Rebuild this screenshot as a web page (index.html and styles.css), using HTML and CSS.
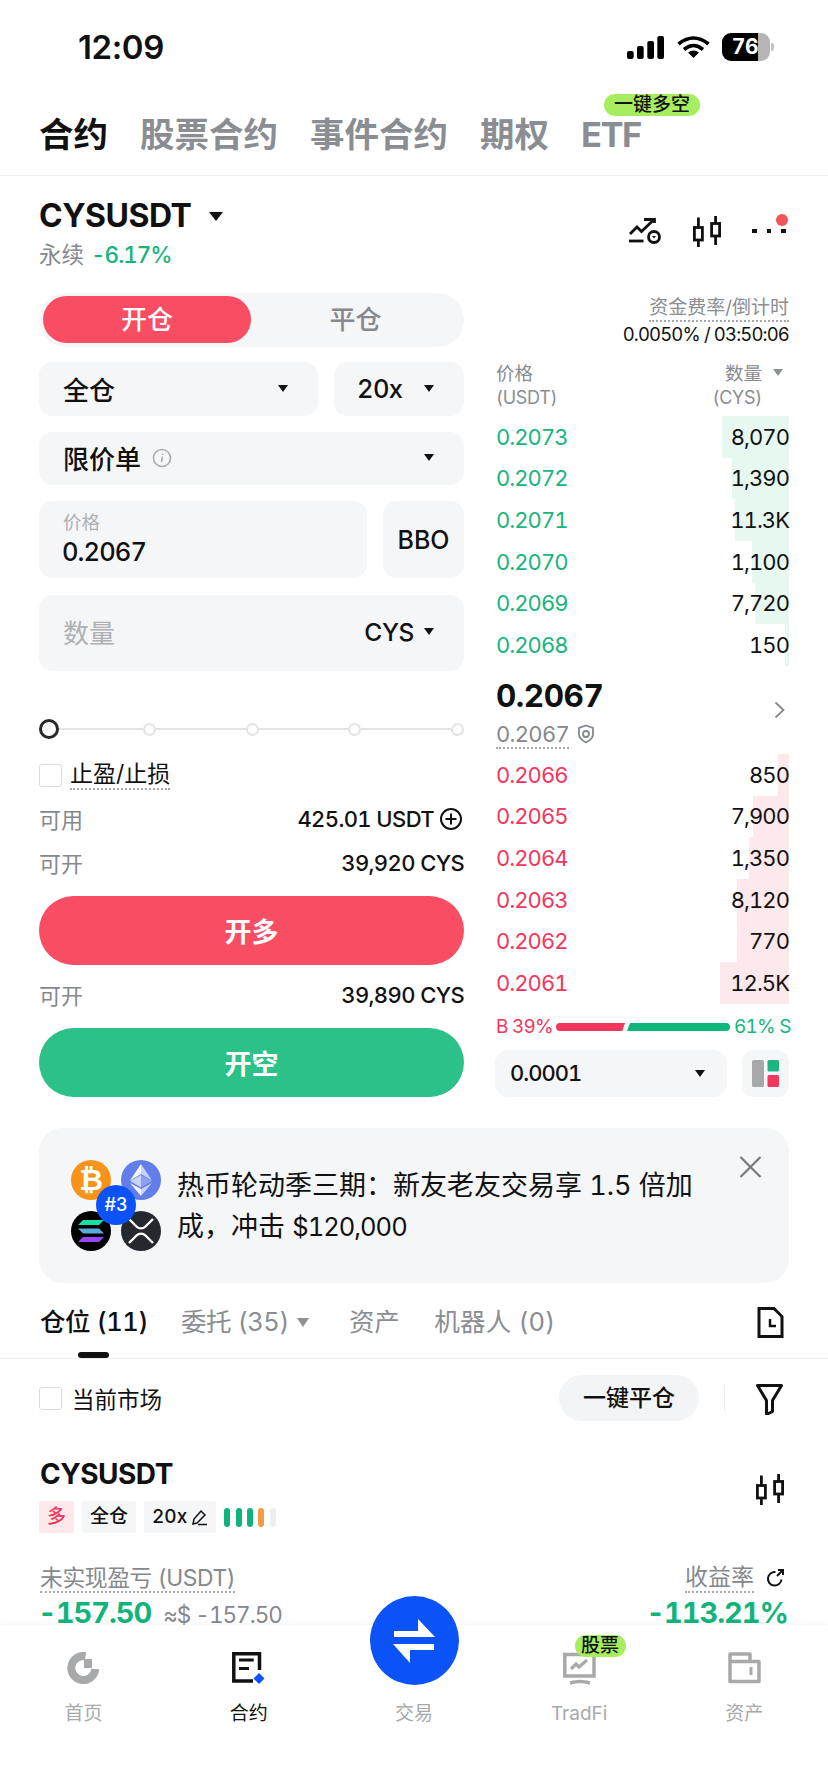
FILE: index.html
```html
<!DOCTYPE html>
<html lang="zh">
<head>
<meta charset="utf-8">
<title>CYSUSDT</title>
<link rel="stylesheet" href="styles.css">
</head>
<body>
<div class="phone">
  <header class="status">
    <span class="time">12:09</span>
    <div class="status-icons">
      <svg width="37" height="23" viewBox="0 0 37 23" fill="#000"><rect x="0" y="15" width="6.700" height="8" rx="2"/><rect x="10" y="10" width="6.700" height="13" rx="2"/><rect x="20.300" y="5" width="6.700" height="18" rx="2"/><rect x="30.300" y="0" width="6.700" height="23" rx="2"/></svg>
      <svg class="wifi" width="33" height="22" viewBox="0 0 33 22" fill="none" stroke="#000" stroke-width="3.600"><path d="M1.500 8Q16.500 -4 31.500 8"/><path d="M7 13.500Q16.500 5.500 26 13.500"/><path d="M11 16.500Q16.500 12.500 22 16.500L16.500 22Z" fill="#000" stroke="none"/></svg>
      <div class="battery"><span class="bat-fill">76</span><span class="bat-rest"></span><span class="bat-tip"></span></div>
    </div>
  </header>

  <nav class="topnav">
    <span class="topnav-item is-active">合约</span>
    <span class="topnav-item">股票合约</span>
    <span class="topnav-item">事件合约</span>
    <span class="topnav-item">期权</span>
    <span class="topnav-item etf">ETF<span class="promo promo-etf">一键多空</span></span>
  </nav>

  <section class="symbol">
    <div>
      <div class="symbol-name">CYSUSDT<i class="tri tri-lg"></i></div>
      <div class="symbol-sub"><span>永续</span><span class="green">-6.17%</span></div>
    </div>
    <div class="symbol-tools">
      <svg width="33" height="26" viewBox="0 0 33 26" fill="none" stroke="#111" stroke-width="2.800"><path d="M1 16l7-7 4.500 4.500L25 1.500M15 1.500h10.500V5"/><path d="M0 23h14.500"/><circle cx="25" cy="19" r="5.500"/><path d="M23 18h4l-2 2.500z" fill="#111" stroke="none"/></svg>
      <svg width="28" height="31" viewBox="0 0 28 31" fill="none" stroke="#111" stroke-width="2.800"><rect x="1.400" y="11.500" width="8" height="12.500"/><rect x="18.600" y="7.500" width="8" height="12.500"/><path d="M5.400 1.500v10M5.400 24v7M22.600 0v7.500M22.600 20v9"/></svg>
      <div class="more"><i></i><i></i><i></i><b></b></div>
    </div>
  </section>

  <main class="trade">
    <div class="form">
      <div class="toggle"><span class="toggle-on">开仓</span><span class="toggle-off">平仓</span></div>
      <div class="field-row">
        <div class="field field-grow h54"><span>全仓</span><i class="tri"></i></div>
        <div class="field lev h54"><span>20x</span><i class="tri"></i></div>
      </div>
      <div class="field h53"><span class="with-info">限价单<svg width="20" height="20" viewBox="0 0 20 20" fill="none" stroke="#a9abaf" stroke-width="1.600"><circle cx="10" cy="10" r="8.500"/><path d="M10.500 8.500l-1 5.500M10.700 5.500v1.500"/></svg></span><i class="tri"></i></div>
      <div class="field-row row-price">
        <div class="field field-grow price">
          <small>价格</small>
          <span>0.2067</span>
        </div>
        <div class="field bbo">BBO</div>
      </div>
      <div class="field qty">
        <span class="muted">数量</span>
        <span class="qty-unit">CYS<i class="tri"></i></span>
      </div>
      <div class="slider">
        <i class="knob"></i><i class="track track-first"></i><i class="tick"></i><i class="track"></i><i class="tick"></i><i class="track"></i><i class="tick"></i><i class="track"></i><i class="tick"></i>
      </div>
      <label class="tpsl"><i class="check"></i><span class="dotted">止盈/止损</span></label>
      <div class="kv first"><span>可用</span><b>425.01 USDT<svg width="22" height="22" viewBox="0 0 22 22" fill="none" stroke="#111" stroke-width="2"><circle cx="11" cy="11" r="10"/><path d="M11 5.500v11M5.500 11h11"/></svg></b></div>
      <div class="kv"><span>可开</span><b>39,920 CYS</b></div>
      <button class="cta cta-red">开多</button>
      <div class="kv after"><span>可开</span><b>39,890 CYS</b></div>
      <button class="cta cta-green">开空</button>
    </div>

    <aside class="book">
      <div class="funding"><span class="dotted">资金费率/倒计时</span><strong>0.0050% / 03:50:06</strong></div>
      <div class="book-head">
        <div>价格<br><small>(USDT)</small></div>
        <div class="right">数量<i class="tri tri-gray"></i><br><small class="cys">(CYS)</small></div>
      </div>
      <div class="rows">
        <div class="row up"><span>0.2073</span><b>8,070</b><i style="width:67px"></i></div>
        <div class="row up"><span>0.2072</span><b>1,390</b><i style="width:57px"></i></div>
        <div class="row up"><span>0.2071</span><b>11.3K</b><i style="width:54px"></i></div>
        <div class="row up"><span>0.2070</span><b>1,100</b><i style="width:37px"></i></div>
        <div class="row up"><span>0.2069</span><b>7,720</b><i style="width:34px"></i></div>
        <div class="row up"><span>0.2068</span><b>150</b><i style="width:4px"></i></div>
      </div>
      <div class="mid">
        <div>
          <div class="last">0.2067</div>
          <div class="mark"><span class="dotted">0.2067</span><svg width="18" height="20" viewBox="0 0 18 20" fill="none" stroke="#85888d" stroke-width="1.800"><path d="M9 1.500l7 2.500v6c0 4-3 6.500-7 8.500-4-2-7-4.500-7-8.500V4z"/><circle cx="9" cy="10" r="3"/></svg></div>
        </div>
        <svg class="chev" width="11" height="18" viewBox="0 0 11 18" fill="none" stroke="#85888d" stroke-width="1.800"><path d="M1.500 1.500L9.500 9l-8 7.500"/></svg>
      </div>
      <div class="rows">
        <div class="row down"><span>0.2066</span><b>850</b><i style="width:11px"></i></div>
        <div class="row down"><span>0.2065</span><b>7,900</b><i style="width:36px"></i></div>
        <div class="row down"><span>0.2064</span><b>1,350</b><i style="width:40px"></i></div>
        <div class="row down"><span>0.2063</span><b>8,120</b><i style="width:52px"></i></div>
        <div class="row down"><span>0.2062</span><b>770</b><i style="width:52px"></i></div>
        <div class="row down"><span>0.2061</span><b>12.5K</b><i style="width:69px"></i></div>
      </div>
      <div class="ratio">
        <span class="red">B 39%</span>
        <i class="ratio-b"></i><i class="ratio-s"></i>
        <span class="green">61% S</span>
      </div>
      <div class="book-foot">
        <div class="precision"><span>0.0001</span><i class="tri"></i></div>
        <div class="layout-btn">
          <svg width="27" height="27" viewBox="0 0 27 27"><rect x="0" y="0" width="12" height="27" rx="1.500" fill="#a7a8aa"/><rect x="15.500" y="0" width="11.500" height="11.500" rx="1.500" fill="#1cb57f"/><rect x="15.500" y="15" width="11.500" height="12" rx="1.500" fill="#f2365c"/></svg>
        </div>
      </div>
    </aside>
  </main>

  <section class="banner">
    <div class="coins">
      <span class="coin btc">₿</span>
      <span class="coin eth"><svg width="24" height="32" viewBox="0 0 24 32"><path d="M12 0L1 16.500 12 10z" fill="#fff" opacity=".95"/><path d="M12 0l11 16.500L12 10z" fill="#c8d1f8"/><path d="M12 11L1 17l11 6.500z" fill="#c8d1f8"/><path d="M12 11l11 6-11 6.500z" fill="#8c9ff0"/><path d="M1 19l11 13v-7z" fill="#fff" opacity=".95"/><path d="M23 19L12 32v-7z" fill="#c8d1f8"/></svg></span>
      <span class="coin sol"><svg width="26" height="22" viewBox="0 0 26 22"><path d="M5 0h21l-5 5H0z" fill="#19dfa5"/><path d="M0 8.500h21l5 5H5z" fill="#5aa9d8"/><path d="M5 17h21l-5 5H0z" fill="#9a45fd"/></svg></span>
      <span class="coin xrp"><svg width="28" height="26" viewBox="0 0 28 26" fill="none" stroke="#fff" stroke-width="2.400"><path d="M2 1l7.500 7.500c2.500 2.500 6.500 2.500 9 0L26 1"/><path d="M2 25l7.500-7.500c2.500-2.500 6.500-2.500 9 0L26 25"/></svg></span>
      <span class="rank">#3</span>
    </div>
    <div class="banner-text">
      <div class="banner-line">热币轮动季三期：新友老友交易享 1.5 倍加</div>
      <div class="banner-line">成，冲击 <span class="tight">$120,000</span></div>
    </div>
    <svg class="close" width="23" height="22" viewBox="0 0 23 22" fill="none" stroke="#77797d" stroke-width="2.200"><path d="M1.500 1l20 20M21.500 1l-20 20"/></svg>
  </section>

  <section class="pos-tabs">
    <span class="pos-tab is-active">仓位 (11)</span>
    <span class="pos-tab w-orders">委托 (35)<i class="tri tri-gray tri-wide"></i></span>
    <span class="pos-tab">资产</span>
    <span class="pos-tab w-bots">机器人 (0)</span>
    <svg class="doc" width="27" height="31" viewBox="0 0 27 31" fill="none" stroke="#111" stroke-width="3"><path d="M2 1.500h15l8 8v20H2z"/><path d="M13 12v7h6" stroke-width="2.500"/></svg>
  </section>

  <section class="pos-tools">
    <label class="cur"><i class="check"></i>当前市场</label>
    <span class="close-all">一键平仓</span>
    <i class="vr"></i>
    <svg class="funnel" width="27" height="31" viewBox="0 0 27 31" fill="none" stroke="#111" stroke-width="3"><path d="M1.500 1.500h24l-9 15v11l-6 3v-14z" stroke-linejoin="round"/></svg>
  </section>

  <section class="position">
    <div class="pos-head">
      <div>
        <div class="pos-name">CYSUSDT</div>
        <div class="tags">
          <span class="tag tag-long">多</span>
          <span class="tag">全仓</span>
          <span class="tag tag-lev">20x<svg width="17" height="17" viewBox="0 0 17 17" fill="none" stroke="#111" stroke-width="1.500"><path d="M2 15l1-5 7-8 4 4-8 8zM7 15.500h9"/></svg></span>
          <span class="risk"><i></i><i></i><i></i><i class="o"></i><i class="n"></i></span>
        </div>
      </div>
      <svg class="pos-candle" width="30" height="31" viewBox="0 0 28 31" fill="none" stroke="#111" stroke-width="2.800"><rect x="1.400" y="11.500" width="8" height="12.500"/><rect x="18.600" y="7.500" width="8" height="12.500"/><path d="M5.400 1.500v10M5.400 24v7M22.600 0v7.500M22.600 20v9"/></svg>
    </div>
    <div class="pnl-labels">
      <span class="dotted unreal">未实现盈亏 (USDT)</span>
      <span class="roe"><span class="dotted">收益率</span><svg width="19" height="19" viewBox="0 0 19 19" fill="none" stroke="#111" stroke-width="2"><path d="M15.500 10.500a6.800 6.800 0 1 1-6-7.500M12 1h5v5M17 1l-6 6"/></svg></span>
    </div>
    <div class="pnl-values">
      <div><b class="pnl">-157.50</b><span class="approx">≈$ -157.50</span></div>
      <b class="pnl">-113.21%</b>
    </div>
  </section>

  <footer class="tabbar">
    <div class="tab">
      <svg width="33" height="33" viewBox="0 0 33 33" fill="none"><path d="M18.500 4.200A12 12 0 1 0 28.300 17" stroke="#a8a9ab" stroke-width="8"/><rect x="17" y="7" width="8" height="9" fill="#a8a9ab"/></svg>
      <span>首页</span>
    </div>
    <div class="tab tab-on">
      <svg width="33" height="33" viewBox="0 0 33 33" fill="none"><path d="M27.500 18V1.800H1.800V29H21" stroke="#111" stroke-width="3.500"/><path d="M7 8H21.700M7 16.500H17" stroke="#111" stroke-width="3"/><path d="M27 21l5.500 5.500L27 32l-5.500-5.500z" fill="#0b53f7"/></svg>
      <span>合约</span>
    </div>
    <div class="tab">
      <i class="tab-spacer"></i>
      <span>交易</span>
    </div>
    <div class="tab">
      <svg width="33" height="33" viewBox="0 0 33 33" fill="none"><path d="M1.800 2.500H31V24H1.800z" stroke="#a8a9ab" stroke-width="3.500"/><path d="M8 17l5-5 3 3 8-7" stroke="#a8a9ab" stroke-width="3.200"/><path d="M7 31q10-3 20 0" stroke="#a8a9ab" stroke-width="3.500"/></svg>
      <span>TradFi</span>
      <b class="promo promo-tab">股票</b>
    </div>
    <div class="tab">
      <svg width="33" height="33" viewBox="0 0 33 33" fill="none"><path d="M2 9V2h20v7M2 9.500h29v20H2z" stroke="#a8a9ab" stroke-width="3.500" stroke-linejoin="round"/><path d="M23 15v8" stroke="#a8a9ab" stroke-width="3"/></svg>
      <span>资产</span>
    </div>
    <button class="fab" aria-label="交易"><svg width="89" height="89" viewBox="0 0 89 89" fill="#fff"><path d="M24 35h24V23l17 18H24z"/><path d="M23 48h41v6H40v13z"/></svg></button>
  </footer>
</div>
</body>
</html>
```
FILE: styles.css
```css
* { box-sizing: border-box; }
html, body { margin: 0; padding: 0; background: #fff; }
body { font-family: "Inter", "Noto Sans CJK SC", sans-serif; color: #111; font-variant-numeric: tabular-nums; }
i { font-style: normal; display: block; }
.phone { position: relative; width: 828px; height: 1792px; overflow: hidden; background: #fff; }
.green { color: #18b47e; }
.red { color: #f2365c; }
.muted { color: #aeb0b4; }
.dotted { border-bottom: 2px dotted #a6a8ab; }

.tri { width: 0; height: 0; border-left: 5px solid transparent; border-right: 5px solid transparent; border-top: 7px solid #111; }
.tri-lg { border-left-width: 7px; border-right-width: 7px; border-top-width: 9px; }
.tri-gray { border-top-color: #8d9094; }
.tri-wide { border-left-width: 6px; border-right-width: 6px; border-top-width: 9px; }

/* status */
.status { height: 95px; padding: 33px 54px 0 78px; display: flex; justify-content: space-between; align-items: flex-start; }
.time { font-size: 33px; line-height: 28px; font-weight: 600; letter-spacing: -.4px; font-variant-numeric: normal; }
.status-icons { display: flex; align-items: center; gap: 12px; height: 28px; }
.wifi { margin-left: 1px; }
.battery { display: flex; align-items: center; height: 28px; }
.bat-fill { width: 36px; height: 28px; background: #000; color: #fff; border-radius: 9px 0 0 9px; font-size: 21px; font-weight: 700; line-height: 28px; text-align: right; letter-spacing: -.5px; }
.bat-rest { width: 12px; height: 28px; background: #b5b5b5; border-radius: 0 9px 9px 0; }
.bat-tip { width: 3px; height: 8px; background: #c4c4c4; margin-left: 1px; border-radius: 0 2px 2px 0; }

/* top nav */
.topnav { height: 81px; padding: 15px 39px 0; display: flex; gap: 32px; border-bottom: 1px solid #eeeff0; }
.topnav-item { font-size: 34.500px; line-height: 50px; font-weight: 700; color: #8a8d92; position: relative; }
.topnav-item.is-active { color: #111; }
.etf { letter-spacing: -1.500px; }
.promo { position: absolute; background: #a6ee5f; color: #111; font-weight: 500; text-align: center; letter-spacing: 0; }
.promo-etf { left: 23px; top: -16px; width: 96px; height: 22px; border-radius: 11px; font-size: 19px; line-height: 22px; }

/* symbol */
.symbol { height: 117px; padding: 22px 40px 0 39px; display: flex; justify-content: space-between; }
.symbol-name { display: flex; align-items: center; font-size: 32px; line-height: 36px; font-weight: 700; letter-spacing: -.5px; }
.symbol-name .tri { margin: 0 0 0 18px; }
.symbol-sub { display: flex; gap: 7px; margin-top: 6px; font-size: 22.500px; line-height: 30px; color: #85888d; }
.symbol-sub .green { font-weight: 500; font-size: 22.500px; letter-spacing: -1px; }
.symbol-tools { display: flex; align-items: center; height: 64px; gap: 31px; margin-top: 1px; }
.more { display: flex; gap: 10px; width: 36px; position: relative; }
.more i { width: 4.500px; height: 4.500px; background: #111; }
.more b { position: absolute; right: 0; top: -15px; width: 12px; height: 12px; border-radius: 50%; background: #f25555; }

/* trade grid */
.trade { padding: 0 39px; display: flex; justify-content: space-between; }
.form { width: 425px; display: flex; flex-direction: column; }
.book { width: 294px; }

.toggle { height: 54px; background: #f5f6f8; border-radius: 27px; padding: 3px 4px; display: flex; font-size: 26px; line-height: 47px; }
.toggle-on { width: 208px; height: 47px; background: #f94d63; color: #fff; border-radius: 24px; text-align: center; font-weight: 500; }
.toggle-off { flex: 1; text-align: center; color: #85888d; font-weight: 500; }

.field { display: flex; align-items: center; justify-content: space-between; background: #f5f6f8; border-radius: 14px; padding: 0 30px 0 24px; font-size: 26px; font-weight: 500; margin-top: 16px; }
.field-row { display: flex; gap: 16px; margin-top: 15px; }
.row-price { margin-top: 16px; }
.field-row .field { margin-top: 0; }
.field-grow { flex: 1; }
.h54 { height: 54px; padding-bottom: 2px; }
.h53 { height: 53px; padding-bottom: 2px; }
.lev { width: 130px; padding: 0 30px 2px 23px; }
.lev span { font-size: 25.500px; letter-spacing: -.6px; }
.with-info { display: flex; align-items: center; gap: 11px; }
.price { height: 77px; flex-direction: column; align-items: flex-start; justify-content: flex-start; padding: 9px 0 0 24px; }
.price small { font-size: 18.500px; line-height: 24px; color: #aeb0b4; font-weight: 400; }
.price span { font-size: 25.500px; line-height: 34px; margin: 1px 0 0 -1px; letter-spacing: -.9px; }
.bbo { width: 81px; height: 77px; padding: 0; justify-content: center; font-size: 25px; }
.qty { height: 76px; margin-top: 17px; padding-bottom: 3px; }
.qty > .muted { font-weight: 400; font-size: 26px; }
.qty-unit { display: flex; align-items: center; gap: 10px; font-size: 24.500px; letter-spacing: -.4px; }

.slider { display: flex; align-items: center; height: 20px; margin-top: 48px; }
.knob { width: 20px; height: 20px; border: 3.500px solid #26282b; border-radius: 50%; }
.track { flex: 1; height: 2.500px; background: #e2e3e5; }
.track-first { flex: none; width: 84px; }
.tick { width: 13px; height: 13px; border: 2px solid #e2e3e5; border-radius: 50%; background: #fff; }

.tpsl { display: flex; align-items: center; gap: 8px; margin-top: 23px; height: 26px; font-size: 23px; line-height: 27px; }
.check { width: 23px; height: 23px; border: 1.500px solid #dadbdd; border-radius: 3px; }
.tpsl .dotted { font-weight: 400; }

.kv { display: flex; align-items: center; justify-content: space-between; height: 28px; font-size: 22px; color: #85888d; margin-top: 16px; }
.kv.first { margin-top: 17px; }
.kv > span { margin-top: -2px; }
.kv b { display: flex; align-items: center; gap: 6px; color: #111; font-weight: 500; font-size: 22px; letter-spacing: -.6px; }
.kv.after { margin-top: 16px; }
.kv svg { margin-right: 2px; }
.cta { width: 100%; height: 69px; border: 0; border-radius: 35px; color: #fff; font: inherit; font-size: 27px; font-weight: 700; }
.cta-red { background: #f94d63; margin-top: 19px; }
.cta-green { background: #2cc188; margin-top: 19px; }

/* order book */
.funding { display: flex; flex-direction: column; align-items: flex-end; height: 57px; padding-top: 3px; }
.funding .dotted { font-size: 19px; line-height: 24px; color: #8a8d92; }
.funding strong { font-size: 18.500px; line-height: 24px; font-weight: 400; letter-spacing: -.85px; }
.book-head { display: flex; justify-content: space-between; height: 66px; padding: 11px 0 0 1px; font-size: 18.500px; line-height: 24px; color: #8a8d92; }
.book-head small { font-size: 18px; line-height: 24px; letter-spacing: -.3px; }
.book-head .right { text-align: right; padding-right: 27px; position: relative; }
.book-head .right .tri { position: absolute; right: 6px; top: 8px; }
.rows { display: flex; flex-direction: column; }
.row { position: relative; display: flex; justify-content: space-between; align-items: center; height: 41.667px; font-size: 22px; padding-left: 1px; letter-spacing: -.95px; }
.row span, .row b { position: relative; z-index: 1; font-weight: 400; }
.row i { position: absolute; right: 0; top: 0; bottom: 0; }
.up span { color: #18b47e; }
.up i { background: #e7f8f1; }
.down span { color: #f2365c; }
.down i { background: #fde8ec; }
.mid { display: flex; align-items: center; justify-content: space-between; height: 88px; padding-left: 1px; padding-right: 4px; }
.last { font-size: 31.500px; line-height: 42px; font-weight: 700; margin-top: 5px; letter-spacing: -.5px; }
.mark { display: flex; align-items: center; gap: 8px; font-size: 22px; line-height: 26px; color: #85888d; margin-top: 4px; letter-spacing: -.7px; }
.mark svg { margin-top: -2px; }
.ratio { display: flex; align-items: center; height: 22px; font-size: 19px; margin-top: 12px; padding-left: 1px; letter-spacing: -.8px; white-space: nowrap; }
.ratio .red { width: 60px; flex: none; }
.ratio .green { margin-left: 4px; }
.ratio-b { width: 69px; height: 8px; flex: none; background: #f2365c; border-radius: 4px 0 0 4px; clip-path: polygon(0 0, 100% 0, 96% 100%, 0 100%); }
.ratio-s { width: 103px; height: 8px; flex: none; margin-left: 2px; background: #0cb578; border-radius: 0 4px 4px 0; clip-path: polygon(3% 0, 100% 0, 100% 100%, 0 100%); }
.book-foot { display: flex; justify-content: space-between; margin-top: 12px; }
.precision { width: 232px; height: 47px; background: #f5f6f8; border-radius: 14px; display: flex; align-items: center; justify-content: space-between; padding: 0 22px 0 15px; font-size: 22px; font-weight: 500; letter-spacing: -1px; }
.layout-btn { width: 47px; height: 47px; background: #f5f6f8; border-radius: 12px; display: flex; align-items: center; justify-content: center; }

/* banner */
.banner { margin: 31px 39px 0; height: 155px; border-radius: 24px; background: #f5f6f8; position: relative; display: flex; padding: 32px 0 0 32px; }
.coins { position: relative; width: 91px; height: 91px; display: grid; grid-template-columns: 40px 40px; grid-template-rows: 40px 40px; gap: 11px 10px; flex: none; }
.coin { width: 40px; height: 40px; border-radius: 50%; display: flex; align-items: center; justify-content: center; }
.btc { background: #f7931a; color: #fff; font: 700 29px "DejaVu Sans", sans-serif; }
.eth { background: #627eea; }
.sol { background: #000; }
.xrp { background: #23292f; }
.rank { position: absolute; left: 25px; top: 25px; width: 40px; height: 40px; border-radius: 50%; background: #0b53f7; color: #fff; font-size: 18px; font-weight: 500; line-height: 40px; text-align: center; }
.banner-text { margin: 5px 0 0 15px; font-size: 27px; line-height: 41px; }
.banner-line { white-space: nowrap; height: 41px; }
.tight { font-size: 25.500px; letter-spacing: -1px; }
.close { position: absolute; right: 27px; top: 28px; }

/* position tabs */
.pos-tabs { height: 76px; padding: 20px 44px 0 40px; display: flex; align-items: flex-start; border-bottom: 1px solid #eeeff0; position: relative; color: #8a8d92; font-size: 25.500px; line-height: 38px; gap: 33px; letter-spacing: -.4px; }
.pos-tab { font-weight: 400; white-space: nowrap; display: flex; align-items: center; }
.pos-tab.is-active { color: #111; font-weight: 500; position: relative; }
.pos-tab.is-active::after { content: ""; position: absolute; left: 38px; top: 49px; width: 31px; height: 6px; border-radius: 3px; background: #111; }
.w-orders { gap: 8px; margin-right: 7px; }
.w-bots { letter-spacing: .2px; margin-left: 2px; }
.doc { margin-left: auto; margin-top: 4px; }

.pos-tools { height: 78px; padding: 0 45px 0 39px; display: flex; align-items: center; }
.cur { display: flex; align-items: center; gap: 10px; font-size: 22.500px; margin-right: auto; }
.close-all { width: 140px; height: 46px; border-radius: 23px; background: #f3f4f5; font-size: 23px; line-height: 46px; text-align: center; font-weight: 500; }
.vr { width: 1px; height: 26px; background: #eee; margin: 0 31px 0 25px; }
.funnel { margin-top: 3px; }

.position { padding: 0 43px 0 40px; margin-top: 20px; }
.pos-head { display: flex; justify-content: space-between; }
.pos-name { font-size: 28px; line-height: 34px; font-weight: 700; letter-spacing: -.5px; }
.tags { display: flex; gap: 8px; margin-top: 10px; margin-left: -1px; align-items: center; }
.tag { height: 32px; line-height: 32px; font-size: 19px; padding: 0 8px; background: #f5f6f8; border-radius: 3px; font-weight: 500; display: flex; align-items: center; gap: 4px; }
.tag-long { background: #fde8ec; color: #f2365c; }
.risk { display: flex; gap: 5.400px; }
.risk i { width: 6px; height: 19px; border-radius: 3px; background: #10b47b; }
.risk .o { background: #f59a47; }
.risk .n { background: #eeeff0; }
.pos-candle { margin-top: 17px; }
.pnl-labels { display: flex; justify-content: space-between; align-items: flex-start; margin-top: 31px; font-size: 23px; line-height: 27px; color: #85888d; }
.unreal { font-size: 22.800px; letter-spacing: -.4px; }
.roe { display: flex; gap: 12px; align-items: center; }
.pnl-values { display: flex; justify-content: space-between; align-items: center; margin: 2px -3px 0 -2px; }
.pnl { font-size: 29px; line-height: 36px; font-weight: 700; color: #12b47c; letter-spacing: -1px; }
.approx { font-size: 22.500px; color: #85888d; margin-left: 12px; letter-spacing: -1px; }

/* tab bar */
.tabbar { position: absolute; left: 0; right: 0; bottom: 0; height: 167px; background: #fff; box-shadow: 0 -2px 6px rgba(0, 0, 0, .04); display: flex; padding: 27px 1px 0; }
.tab { position: relative; width: 165.200px; display: flex; flex-direction: column; align-items: center; font-size: 19px; color: #a8a9ab; }
.tab span { margin-top: 16px; line-height: 26px; }
.tab-on { color: #111; }
.tab-spacer { height: 33px; }
.promo-tab { left: 78px; top: -17px; width: 51px; height: 22px; border-radius: 11px; font-size: 19px; line-height: 22px; }
.fab { position: absolute; left: 370px; top: -29px; width: 89px; height: 89px; border: 0; padding: 0; border-radius: 50%; background: #0b53f7; }
.fab svg { display: block; }
```
